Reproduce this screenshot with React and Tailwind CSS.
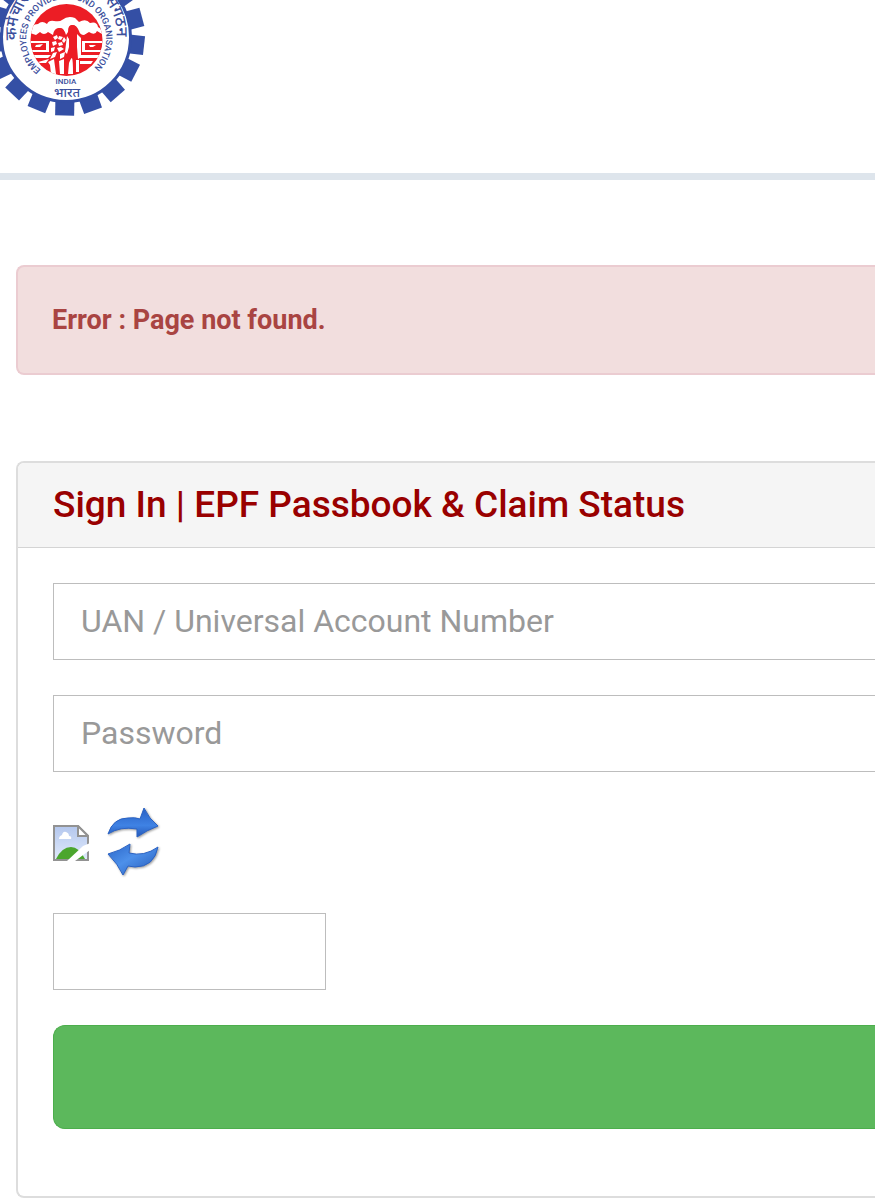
const TEETH = Array.from({ length: 17 }, (_, i) => 1 + (i * 360) / 17);

function EmblemLogo() {
  return (
    <svg viewBox="0 0 146 160" className="-mt-11 block h-[160px] w-[146px]" role="img" aria-label="EPFO">
      <defs>
        <path id="outerArc" d="M17 84 A50 50 0 1 1 116 84" />
        <path id="innerArc" d="M41 114 A40 40 0 1 1 90 115" />
        <clipPath id="disc">
          <circle cx="66.500" cy="84" r="36" />
        </clipPath>
      </defs>
      <g transform="translate(66 81)">
        {TEETH.map((a) => (
          <path key={a} d="M-9.500 63 L9.500 63 L9.500 78.500 L-9.500 78.500 Z" fill="#344fa5" transform={`rotate(${a})`} />
        ))}
        <circle r="64.500" fill="#fff" stroke="#344fa5" strokeWidth="3" />
      </g>
      <circle cx="66.500" cy="84" r="36" fill="#ec1d25" />
      <g clipPath="url(#disc)" fill="#fff">
        <path d="M30 77Q31 68 38 68Q42 64 47 68Q49 64 54 65Q60 66 62 64Q68 59 75 62L79 66Q86 62 90 67Q97 65 98 71Q103 74 102 78L97 75Q95 80 89 76L84 79Q80 79 79 75Q77 69 72 69Q68 70 68 76L66 79Q65 73 59 72Q54 72 53 79L48 76Q44 80 40 76L36 79Z" />
        <path d="M31 85H49V87H31Z M46 87H49V95H46Z M31 94H49V96H31Z M36 89L43 88L40 91H35Z" />
        <path d="M82 85H102V87H85V94H102V96H82Z M89 89H96L93 91H90Z" />
        <path d="M33 99H51L48 102H34Z M79 99H100L98 102H79Z M38 106L49 103L46 107H40Z M80 105H93L91 108H80Z" />
        <path d="M53 81l4-2 1 3-3 2z M59 80l4 1-2 3-3-1z M64 81l2 3-2 3-2-2z M52 86l4-1 1 3-4 2z M58 87l4-1 1 3-4 1z M51 92l4-1-1 4-3 1z M57 92l4-1 3 2-5 3z M53 97l4-1-2 5-5 2z M60 98l5-2-1 5-4 2z" />
        <path d="M67 80L69 83L69 91L67 98L65 96L66 88Z M77 78L81 82V101L78 103L77 91Z" />
        <path d="M69 107Q71 102 72 102Q73 104 73 118H68Z M76 104H79V116H76Z M48 106L54 103L56 118H51L50 109Z M59 105L64 103V118H60Z" />
        <circle cx="60" cy="76" r="4" fill="#ec1d25" />
        <circle cx="72.500" cy="73" r="4" fill="#ec1d25" />
      </g>
      <g fill="#3c4f9c" className="font-['Roboto','Noto_Sans','Noto_Sans_Devanagari',sans-serif]">
        <text fontSize="9" fontWeight="500">
          <textPath href="#innerArc">EMPLOYEES PROVIDENT FUND ORGANISATION</textPath>
        </text>
        <text fontSize="16" fontWeight="500">
          <textPath href="#outerArc">कर्मचारी भविष्य निधि संगठन</textPath>
        </text>
        <text x="66" y="128" fontSize="8" fontWeight="500" textAnchor="middle">INDIA</text>
        <text x="67" y="141" fontSize="13" fontWeight="500" textAnchor="middle">भारत</text>
      </g>
    </svg>
  );
}

function BrokenImage() {
  return (
    <svg viewBox="0 0 36 36" className="h-9 w-9" role="img" aria-label="Captcha">
      <defs>
        <linearGradient id="sky" x1="0" y1="0" x2="0" y2="1">
          <stop offset="0" stopColor="#b5c8ee" />
          <stop offset="1" stopColor="#dfe9fb" />
        </linearGradient>
      </defs>
      <path d="M1 1H25L35 11V35H1Z" fill="#fff" stroke="#929292" strokeWidth="2" />
      <path d="M2 2H24V12H34V34H2Z" fill="url(#sky)" />
      <path d="M6 14Q6 11 9 10Q10 6 13 7Q16 8 16 11Q19 11 18 14Z" fill="#fff" />
      <path d="M3 34Q9 22 18 22Q26 22 32 34Z" fill="#4ba62d" />
      <path d="M25 1V11H35Z" fill="#fff" stroke="#929292" strokeWidth="2" />
      <path d="M37 18L30 21L14 36H22L37 25Z" fill="#fff" />
    </svg>
  );
}

function RefreshArrows() {
  return (
    <svg viewBox="0 0 56 72" className="h-[72px] w-14 drop-shadow-[1px_1px_1px_rgba(0,0,0,0.4)]" aria-hidden="true">
      <defs>
        <linearGradient id="blueTop" x1="0" y1="0" x2="0" y2="1">
          <stop offset="0" stopColor="#2860c4" />
          <stop offset="0.6" stopColor="#3f82e4" />
          <stop offset="1" stopColor="#2559b8" />
        </linearGradient>
        <linearGradient id="blueLow" x1="0" y1="0" x2="1" y2="1">
          <stop offset="0" stopColor="#2a65c8" />
          <stop offset="0.45" stopColor="#4d90ea" />
          <stop offset="1" stopColor="#2357b5" />
        </linearGradient>
      </defs>
      <path d="M3 27Q8 11 23 11Q30 10 35 12L39 1Q44 12 53 19Q42 23 32 30L32 22Q15 19 3 27Z" fill="url(#blueTop)" stroke="#2a62c4" strokeWidth="1" strokeLinejoin="round" />
      <path d="M53 40Q49 60 30 60L23 59L18 68Q13 57 3 47Q15 44 25 37L24 46Q39 50 53 40Z" fill="url(#blueLow)" stroke="#2a62c4" strokeWidth="1" strokeLinejoin="round" />
    </svg>
  );
}

const fieldClass =
  "block border border-[#bdbdbd] bg-white px-[27px] py-[19px] text-[32px] leading-[37px] text-[#555] outline-none placeholder:text-[#999] placeholder:opacity-100";

export default function App() {
  return (
    <div className="min-h-screen overflow-hidden bg-white font-['Roboto',sans-serif]">
      <header className="border-b-[7px] border-[#dee5ec] pb-[57px]">
        <EmblemLogo />
      </header>
      <main className="flex flex-col gap-[86px] pt-[85px] pl-4">
        <div role="alert" className="rounded-l-lg border-2 border-r-0 border-[#ebccd1] bg-[#f2dede] px-[34px] py-[34px] text-[27px] leading-[38px] font-bold text-[#a94442]">
          Error : Page not found.
        </div>
        <section className="rounded-l-lg border-2 border-r-0 border-[#ddd]">
          <h1 className="rounded-tl-md border-b border-[#d4d4d4] bg-[#f5f5f5] px-[35px] py-[18px] text-[37px] leading-[48px] font-medium text-[#990000]">
            Sign In | EPF Passbook &amp; Claim Status
          </h1>
          <form className="flex flex-col gap-[35px] pt-[35px] pb-[67px] pl-[35px]" onSubmit={(e) => e.preventDefault()}>
            <input type="text" aria-label="UAN / Universal Account Number" placeholder="UAN / Universal Account Number" className={`${fieldClass} w-full border-r-0`} />
            <input type="password" aria-label="Password" placeholder="Password" className={`${fieldClass} w-full border-r-0`} />
            <div className="flex h-[71px] items-center gap-4">
              <BrokenImage />
              <button type="button" aria-label="Refresh captcha">
                <RefreshArrows />
              </button>
            </div>
            <input type="text" aria-label="Captcha" className={`${fieldClass} w-[273px]`} />
            <button type="submit" aria-label="Sign In" className="h-[104px] w-full rounded-l-xl border border-r-0 border-[#4cae4c] bg-[#5cb85c]" />
          </form>
        </section>
      </main>
    </div>
  );
}
